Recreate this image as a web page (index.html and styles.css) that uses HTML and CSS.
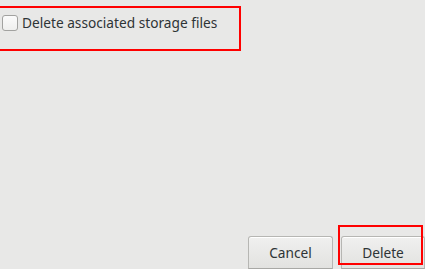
FILE: index.html
```html
<!DOCTYPE html>
<html>
<head>
<meta charset="utf-8">
<link rel="stylesheet" href="styles.css">
</head>
<body>
<div class="dialog">
  <div class="option-box">
    <label class="check-row">
      <span class="checkbox"></span>
      <span class="check-label">Delete associated storage files</span>
    </label>
  </div>
  <div class="spacer"></div>
  <div class="actions">
    <button class="btn">Cancel</button>
    <button class="btn">Delete</button>
    <div class="highlight"></div>
  </div>
</div>
</body>
</html>
```

FILE: styles.css
```css
* { box-sizing: border-box; }
html, body {
  margin: 0;
  padding: 0;
  background: #e8e8e7;
  overflow: hidden;
}
.dialog {
  width: 425px;
  height: 269px;
  display: flex;
  flex-direction: column;
  font-family: "Noto Sans", sans-serif;
  font-size: 13.7px;
  color: #2e3436;
  position: relative;
}
.option-box {
  margin: 6px 0 0 -4px;
  width: 245px;
  height: 45px;
  border: 2px solid #ff0000;
  padding: 7px 0 0 4px;
}
.check-row {
  display: flex;
  align-items: center;
  height: 16px;
}
.checkbox {
  width: 16px;
  height: 16px;
  border: 1px solid #a2a2a0;
  border-radius: 3px;
  background: linear-gradient(#fbfbfb, #efefee);
  flex: none;
}
.check-label {
  margin-left: 4px;
  line-height: 16px;
}
.spacer { flex: 1; }
.actions {
  display: flex;
  justify-content: flex-end;
  gap: 8px;
  position: relative;
}
.btn {
  width: 85px;
  height: 33px;
  border: 1px solid #b6b6b3;
  border-bottom-color: #a8a8a5;
  border-radius: 3px 3px 0 0;
  background: linear-gradient(#f0f0ef, #e2e2e0);
  box-shadow: inset 0 1px 0 #ffffff;
  font-family: "Noto Sans", sans-serif;
  font-size: 13.7px;
  color: #2e3436;
  padding: 0;
}
.btn:last-of-type { width: 84px; }
.highlight {
  position: absolute;
  left: 338px;
  top: -11px;
  width: 85px;
  height: 40px;
  border: 2px solid #ff0000;
}
```
